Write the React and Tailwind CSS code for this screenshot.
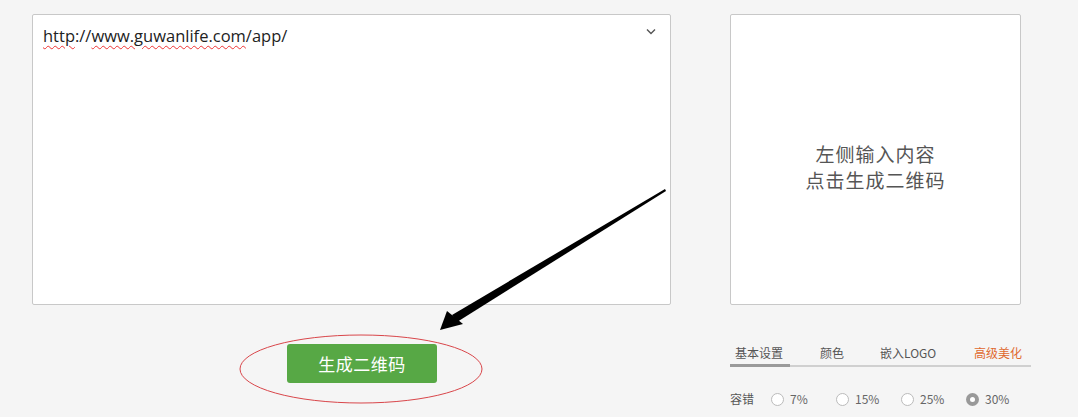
import React, { useState } from 'react';

const tabs = [
    { label: '基本设置', cls: 'w-[60px] pl-[5px]' },
    { label: '颜色', cls: 'w-[60px] pl-[30px]' },
    { label: '嵌入LOGO', cls: 'w-[114px] pl-[30px]' },
    { label: '高级美化', cls: 'w-[67px] pl-[10px]' },
];
const levels = ['7%', '15%', '25%', '30%'];

// annotations drawn over the page (arrow + circle)
const Annotations = () => (
    <svg className="absolute inset-0 pointer-events-none" width="1078" height="417" viewBox="0 0 1078 417">
        <ellipse cx="361" cy="369" rx="121" ry="34" fill="none" stroke="#d9464a" strokeWidth="1" />
        <polygon points="665,189 666,191 457,322 452,315" fill="#000" />
        <polygon points="440,330 447,311 463,324" fill="#000" />
    </svg>
);

const Radio = ({ checked, label, onClick }) => (
    <button onClick={onClick} className="w-[65px] flex items-center gap-[6px] text-[12px] text-[#666]">
        {checked ? (
            <span className="w-[13px] h-[13px] rounded-full bg-[#999] flex items-center justify-center">
                <span className="w-[5px] h-[5px] rounded-full bg-white" />
            </span>
        ) : (
            <span className="w-[13px] h-[13px] rounded-full bg-white border border-[#bbb]" />
        )}
        {label}
    </button>
);

export default function App() {
    const [tab, setTab] = useState(0);
    const [level, setLevel] = useState(3);

    return (
        <div
            className="relative w-[1078px] h-[417px] overflow-hidden bg-[#f5f5f5]"
            style={{ fontFamily: '"Noto Sans CJK SC", "Microsoft YaHei", sans-serif' }}
        >
            <div className="flex pl-[32px] pt-[14px] gap-[59px]">
                {/* Input column */}
                <div className="w-[639px] flex flex-col">
                    <div className="relative h-[291px] bg-white border border-[#c8c8c8] rounded-[2px] px-[10px] pt-[9px]">
                        <div className="text-[16.5px] leading-[24px] text-[#222]" style={{ fontFamily: '"Open Sans", "Noto Sans", sans-serif' }}>
                            <span className="underline decoration-wavy decoration-[#e33] decoration-1 underline-offset-[3px]">http</span>
                            ://
                            <span className="underline decoration-wavy decoration-[#e33] decoration-1 underline-offset-[3px]">www.guwanlife.com</span>
                            /app/
                        </div>
                        <svg className="absolute right-[14px] top-[13px]" width="10" height="7" viewBox="0 0 10 7">
                            <path d="M1 1.5 L5 5.5 L9 1.5" fill="none" stroke="#555" strokeWidth="1.4" />
                        </svg>
                    </div>
                    <button className="mt-[39px] ml-[255px] w-[150px] h-[39px] rounded-[3px] bg-[#57a845] text-white text-[17px] tracking-[0.5px]">
                        生成二维码
                    </button>
                </div>

                {/* Preview column */}
                <div className="w-[301px] flex flex-col">
                    <div className="w-[291px] h-[291px] bg-white border border-[#c8c8c8] rounded-[2px] flex flex-col items-center justify-center text-[19px] leading-[26px] text-[#555] tracking-[1px]">
                        <div className="mt-[14px]">左侧输入内容</div>
                        <div>点击生成二维码</div>
                    </div>

                    <div className="mt-[36px] flex border-b-[2px] border-[#d0d0d0] text-[12px] h-[26px]">
                        {tabs.map((t, i) => (
                            <button
                                key={t.label}
                                onClick={() => setTab(i)}
                                className={
                                    (i === tab ? 'border-b-[3px] border-[#9a9a9a] -mb-[2px] ' : '') +
                                    (i === 3 ? 'text-[#e0692e] ' : 'text-[#555] ') +
                                    'whitespace-nowrap text-left leading-[22px] ' + t.cls
                                }
                            >
                                {t.label}
                            </button>
                        ))}
                    </div>

                    <div className="mt-[23px] flex items-center text-[12px] text-[#555]">
                        <span className="w-[42px]">容错</span>
                        <div className="flex">
                            {levels.map((l, i) => (
                                <Radio key={l} label={l} checked={i === level} onClick={() => setLevel(i)} />
                            ))}
                        </div>
                    </div>
                </div>
            </div>
            <Annotations />
        </div>
    );
}
